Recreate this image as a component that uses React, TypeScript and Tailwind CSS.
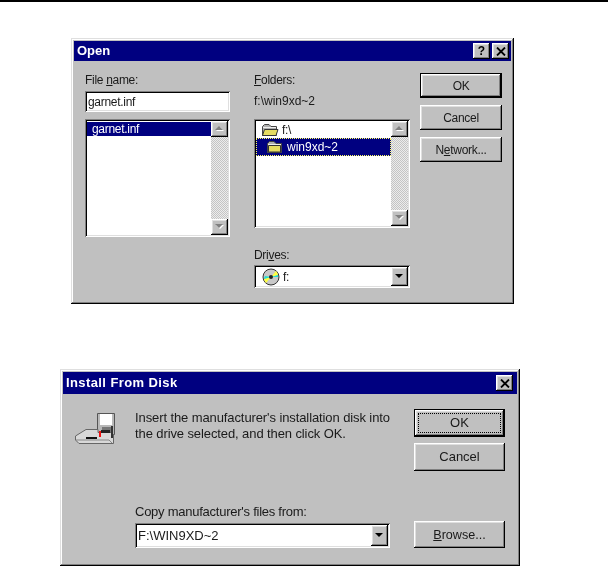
const raised = "shadow-[inset_-1px_-1px_#000,inset_1px_1px_#fff,inset_-2px_-2px_#808080,inset_2px_2px_#dfdfdf]";
const sunken = "shadow-[inset_1px_1px_#808080,inset_-1px_-1px_#fff,inset_2px_2px_#000,inset_-2px_-2px_#dfdfdf]";
const win = "shadow-[inset_-1px_-1px_#000,inset_1px_1px_#dfdfdf,inset_-2px_-2px_#808080,inset_2px_2px_#fff]";

function Arrow({ dir, disabled }: { dir: "up" | "down"; disabled?: boolean }) {
  const pts = dir === "up" ? "4,0 8,4 0,4" : "0,0 8,0 4,4";
  return (
    <svg width="9" height="6" viewBox="0 0 9 6">
      {disabled && <polygon points={pts} fill="#fff" transform="translate(1,1)" />}
      <polygon points={pts} fill={disabled ? "#808080" : "#000"} />
    </svg>
  );
}

function SmallBtn({ dir, disabled, className }: { dir: "up" | "down"; disabled?: boolean; className: string }) {
  return (
    <div className={`flex items-center justify-center bg-[#c0c0c0] ${raised} ${className}`}>
      <Arrow dir={dir} disabled={disabled} />
    </div>
  );
}

function Track({ className }: { className: string }) {
  return (
    <div className={`flex flex-col justify-between bg-[repeating-conic-gradient(#ececec_0_25%,#c4c4c4_0_50%)] bg-[length:2px_2px] ${className}`}>
      <SmallBtn dir="up" disabled className="h-[16px] w-full" />
      <SmallBtn dir="down" disabled className="h-[16px] w-full" />
    </div>
  );
}

function PushButton({ children, className, isDefault, focus, size }: { children: React.ReactNode; className: string; isDefault?: boolean; focus?: boolean; size: string }) {
  return (
    <div className={`${isDefault ? "border border-black" : ""} ${className}`}>
      <div className={`relative flex h-full w-full items-center justify-center bg-[#c0c0c0] text-[#1a1a1a] ${size} ${raised}`}>
        {focus && <div className="absolute inset-[3px] border border-dotted border-black" />}
        {children}
      </div>
    </div>
  );
}

function Folder({ open }: { open?: boolean }) {
  return (
    <svg width="18" height="14" viewBox="0 0 18 14" className="shrink-0">
      <path d="M1.5 3.5 L3.5 1.5 H8 L10 3.5 H15.5 V12.5 H1.5 Z" fill="#b0b0b0" stroke="#444" />
      <path d="M2 4 H15 V5 H2 Z" fill="#eee" />
      {open ? (
        <path d="M3.5 6.5 H17 L15 12.5 H1.5 Z" fill="#e6dc60" stroke="#333" />
      ) : (
        <path d="M2.5 5.5 H14.5 V12 H2.5 Z" fill="#e6dc60" stroke="#333" />
      )}
    </svg>
  );
}

function Cd() {
  return (
    <svg width="18" height="18" viewBox="0 0 18 18" className="shrink-0">
      <circle cx="9" cy="9" r="8" fill="#c8c8c8" stroke="#333" />
      <path d="M9 9 L14 3 A8 8 0 0 1 16 7 Z" fill="#ffff40" />
      <path d="M9 9 L4 15 A8 8 0 0 1 2 11 Z" fill="#ffff40" />
      <path d="M9 9 L2 11 A8 8 0 0 1 3 8 Z" fill="#20e0d0" />
      <path d="M9 9 L16 7 A8 8 0 0 1 16 9 Z" fill="#20e0d0" />
      <circle cx="9" cy="9" r="2" fill="#222" />
    </svg>
  );
}

function DiskDrive() {
  return (
    <svg width="40" height="32" viewBox="0 0 40 32" className="shrink-0">
      <path d="M22.5 1.5 H39.5 V22.5 H22.5 Z" fill="#b8b8b8" stroke="#555" />
      <rect x="25" y="2" width="12" height="11" fill="#fff" />
      <rect x="27" y="15" width="9" height="7" fill="#777" />
      <path d="M11 17.5 H23 V20.5 H36.5 L38.5 23 V31.5 H4 L0.5 28 V24 Z" fill="#d8d8d8" stroke="#666" />
      <path d="M1 28 H34 L37 31" fill="none" stroke="#888" />
      <rect x="11" y="25" width="11" height="2" fill="#111" />
      <rect x="24" y="19" width="2" height="6" fill="#f01010" />
      <rect x="26" y="18" width="9" height="3" fill="#222" />
      <rect x="36" y="14" width="2" height="12" fill="#333" />
    </svg>
  );
}

function TitleButton({ children, className = "" }: { children: React.ReactNode; className?: string }) {
  return (
    <div className={`flex h-[16px] w-[17px] items-center justify-center bg-[#c0c0c0] text-[12px] font-bold leading-none text-black ${raised} ${className}`}>
      {children}
    </div>
  );
}

function CloseGlyph() {
  return (
    <svg width="10" height="9" viewBox="0 0 10 9">
      <path d="M1 0.5 L9 8.5 M9 0.5 L1 8.5" stroke="#000" strokeWidth="1.8" />
    </svg>
  );
}

function OpenDialog() {
  return (
    <div className={`ml-[71px] mt-[36px] flex h-[266px] w-[443px] flex-col bg-[#c0c0c0] p-[3px] ${win}`}>
      <div className="flex h-[20px] items-center justify-between bg-[#000080] pl-[3px] pr-[2px]">
        <span className="text-[13px] font-bold text-white">Open</span>
        <div className="flex">
          <TitleButton className="mr-[2px]">?</TitleButton>
          <TitleButton><CloseGlyph /></TitleButton>
        </div>
      </div>
      <div className="flex flex-1 pl-[11px] pt-[11px] text-[12px] leading-[16px] tracking-[-0.3px] text-[#1a1a1a]">
        <div className="w-[145px]">
          <div className="h-[16px]">File <u>n</u>ame:</div>
          <div className={`mt-[3px] flex h-[21px] items-center bg-white pl-[3px] pt-[1px] ${sunken}`}>garnet.inf</div>
          <div className={`mt-[7px] flex h-[118px] bg-white p-[2px] ${sunken}`}>
            <div className="flex-1 pt-[1px]">
              <div className="h-[14px] bg-[#000080] pl-[5px] leading-[14px] text-white">garnet.inf</div>
            </div>
            <Track className="h-full w-[17px]" />
          </div>
        </div>
        <div className="ml-[24px] w-[156px]">
          <div className="h-[16px]"><u>F</u>olders:</div>
          <div className="mt-[5px] h-[16px] tracking-normal">f:\win9xd~2</div>
          <div className={`mt-[10px] flex h-[109px] bg-white p-[2px] ${sunken}`}>
            <div className="flex-1">
              <div className="flex h-[17px] items-center gap-[3px] pl-[5px]"><Folder open />f:\</div>
              <div className="flex h-[18px] items-center gap-[3px] border border-dotted border-[#ffff60] bg-[#000080] pl-[9px] tracking-normal text-white"><Folder />win9xd~2</div>
            </div>
            <Track className="h-full w-[17px]" />
          </div>
          <div className="mt-[19px] h-[16px]">Dri<u>v</u>es:</div>
          <div className={`mt-[2px] flex h-[23px] items-center justify-between bg-white p-[2px] ${sunken}`}>
            <div className="flex items-center gap-[3px] pl-[6px]"><Cd />f:</div>
            <SmallBtn dir="down" className="h-[19px] w-[17px]" />
          </div>
        </div>
        <div className="ml-[10px] mt-[1px] flex w-[82px] flex-col gap-[7px]">
          <PushButton isDefault size="text-[12px]" className="h-[25px]">OK</PushButton>
          <PushButton size="text-[12px]" className="h-[25px]">Cancel</PushButton>
          <PushButton size="text-[12px]" className="h-[25px]"><span>N<u>e</u>twork...</span></PushButton>
        </div>
      </div>
    </div>
  );
}

function InstallDialog() {
  return (
    <div className={`ml-[60px] mt-[65px] flex h-[197px] w-[460px] flex-col bg-[#c0c0c0] p-[3px] ${win}`}>
      <div className="flex h-[22px] items-center justify-between bg-[#000080] pl-[3px] pr-[4px]">
        <span className="text-[13px] font-bold tracking-[0.4px] text-white">Install From Disk</span>
        <TitleButton><CloseGlyph /></TitleButton>
      </div>
      <div className="flex flex-1 pl-[12px] text-[13px] leading-[16px] text-[#1a1a1a]">
        <div className="w-[60px] pt-[18px]"><DiskDrive /></div>
        <div className="w-[279px] pt-[16px]">
          <div className="h-[32px] w-[270px] tracking-[-0.1px]">
            Insert the manufacturer's installation disk into<br />the drive selected, and then click OK.
          </div>
          <div className="mt-[62px] h-[16px] tracking-[-0.25px]">Copy manufacturer's files from:</div>
          <div className={`mt-[3px] flex h-[25px] w-[255px] items-center justify-between bg-white p-[2px] ${sunken}`}>
            <span className="pl-[1px]">F:\WIN9XD~2</span>
            <SmallBtn dir="down" className="h-[21px] w-[17px]" />
          </div>
        </div>
        <div className="pt-[15px]">
          <div className="flex w-[91px] flex-col gap-[6px]">
            <PushButton isDefault focus size="text-[13px]" className="h-[28px]">OK</PushButton>
            <PushButton size="text-[13px]" className="h-[28px]">Cancel</PushButton>
            <PushButton size="text-[12.6px]" className="mt-[44px] h-[27px]"><span><u>B</u>rowse...</span></PushButton>
          </div>
        </div>
      </div>
    </div>
  );
}

export default function App() {
  return (
    <div className="h-[566px] w-[608px] overflow-hidden bg-white font-['Liberation_Sans',Arial,sans-serif] blur-[0.35px]">
      <div className="h-[2px] bg-black" />
      <OpenDialog />
      <InstallDialog />
    </div>
  );
}
